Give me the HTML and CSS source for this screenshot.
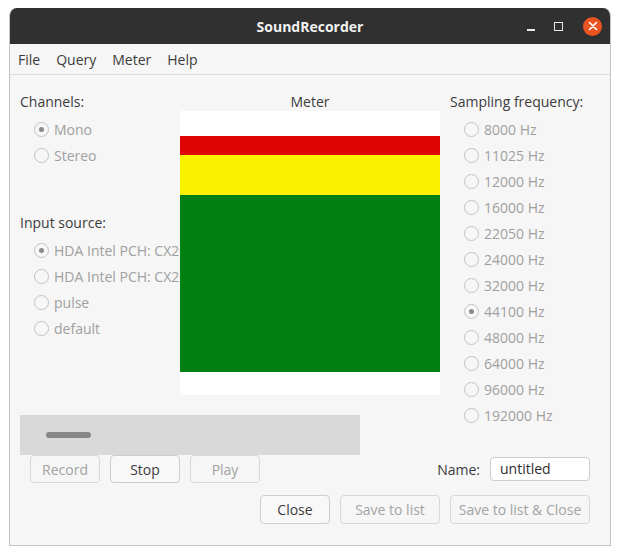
FILE: index.html
```html
<!DOCTYPE html>
<html>
<head>
<meta charset="utf-8">
<link rel="stylesheet" href="styles.css">
</head>
<body>
<div class="window">
  <div class="titlebar">
    <div class="title">SoundRecorder</div>
    <div class="controls">
      <span class="ctl min"></span>
      <span class="ctl max"></span>
      <span class="ctl close">
        <svg width="18" height="18" viewBox="0 0 18 18"><path d="M5.5 5.5 L12.5 12.5 M12.5 5.5 L5.5 12.5" stroke="#fff" stroke-width="1.6" stroke-linecap="round"/></svg>
      </span>
    </div>
  </div>
  <div class="menubar">
    <span class="menu">File</span>
    <span class="menu">Query</span>
    <span class="menu">Meter</span>
    <span class="menu">Help</span>
  </div>
  <div class="content">
    <div class="grid">
      <div class="leftcol">
        <div class="label">Channels:</div>
        <div class="radio checked"><span class="dot"></span>Mono</div>
        <div class="radio"><span class="dot"></span>Stereo</div>
        <div class="label src">Input source:</div>
        <div class="radio checked"><span class="dot"></span>HDA Intel PCH: CX20751/2 Analog</div>
        <div class="radio"><span class="dot"></span>HDA Intel PCH: CX20751/2 Alt Analog</div>
        <div class="radio"><span class="dot"></span>pulse</div>
        <div class="radio"><span class="dot"></span>default</div>
      </div>
      <div class="metercol">
        <div class="label center">Meter</div>
        <div class="meter">
          <div class="m white1"></div>
          <div class="m red"></div>
          <div class="m yellow"></div>
          <div class="m green"></div>
          <div class="m white2"></div>
        </div>
      </div>
      <div class="rightcol">
        <div class="label">Sampling frequency:</div>
        <div class="radio"><span class="dot"></span>8000 Hz</div>
        <div class="radio"><span class="dot"></span>11025 Hz</div>
        <div class="radio"><span class="dot"></span>12000 Hz</div>
        <div class="radio"><span class="dot"></span>16000 Hz</div>
        <div class="radio"><span class="dot"></span>22050 Hz</div>
        <div class="radio"><span class="dot"></span>24000 Hz</div>
        <div class="radio"><span class="dot"></span>32000 Hz</div>
        <div class="radio checked"><span class="dot"></span>44100 Hz</div>
        <div class="radio"><span class="dot"></span>48000 Hz</div>
        <div class="radio"><span class="dot"></span>64000 Hz</div>
        <div class="radio"><span class="dot"></span>96000 Hz</div>
        <div class="radio"><span class="dot"></span>192000 Hz</div>
      </div>
      <div class="scale"><span class="handle"></span></div>
    </div>
    <div class="row1">
      <div class="btns">
        <button class="btn disabled w70">Record</button>
        <button class="btn w70">Stop</button>
        <button class="btn disabled w70">Play</button>
      </div>
      <div class="name">
        <span class="namelabel">Name:</span>
        <span class="entry">untitled</span>
      </div>
    </div>
    <div class="row2">
      <button class="btn w70">Close</button>
      <button class="btn disabled w100">Save to list</button>
      <button class="btn disabled w140">Save to list &amp; Close</button>
    </div>
  </div>
</div>
</body>
</html>
```
FILE: styles.css
```css
* { box-sizing: border-box; }
html, body { margin: 0; padding: 0; background: #ffffff; }
body {
  font-family: "Open Sans", "Noto Sans", sans-serif;
  font-size: 14px;
  color: #3c3c3c;
}
.window {
  margin: 8px 0 0 9px;
  width: 602px;
  height: 538px;
  background: #f6f6f6;
  border: 1px solid #c4c4c4;
  border-top: none;
  border-radius: 8px 8px 0 0;
  overflow: hidden;
}
.titlebar {
  height: 36px;
  background: #303030;
  display: flex;
  align-items: center;
  justify-content: center;
  position: relative;
  margin: 0 -1px;
}
.title {
  color: #f2f2f2;
  font-weight: 700;
  font-size: 14px;
}
.controls {
  position: absolute;
  right: 9px;
  top: 0;
  height: 36px;
  display: flex;
  align-items: center;
  gap: 0;
}
.ctl { display: block; }
.min { width: 8px; height: 1.5px; background: #e8e8e8; margin-top: 8px; margin-right: 19px; }
.max { width: 9px; height: 9px; border: 1.3px solid #e8e8e8; margin-right: 20px; }
.close {
  width: 19px; height: 19px; border-radius: 50%;
  background: #e95420;
  display: flex; align-items: center; justify-content: center;
}
.menubar {
  height: 31px;
  border-bottom: 1px solid #dedede;
  display: flex;
  align-items: center;
  padding-left: 0;
  gap: 0;
}
.menu { padding: 0 8px; color: #3c3c3c; }
.content { padding: 18px 10px 0 10px; }
.grid {
  display: grid;
  grid-template-columns: 160px 260px 150px;
  column-gap: 0;
  grid-template-rows: 302px 60px;
}
.leftcol { grid-column: 1; grid-row: 1; overflow: hidden; white-space: nowrap; }
.metercol { grid-column: 2; grid-row: 1; display: flex; flex-direction: column; }
.rightcol { grid-column: 3; grid-row: 1 / span 2; padding-left: 10px; white-space: nowrap; }
.label { height: 18px; line-height: 18px; color: #3c3c3c; }
.label.center { text-align: center; }
.label.src { margin-top: 46px; }
.radio {
  height: 26px;
  display: flex;
  align-items: center;
  padding-left: 14px;
  color: #a0a0a0;
}
.leftcol .label + .radio, .rightcol .label + .radio { margin-top: 5px; }
.dot {
  width: 15px; height: 15px;
  border: 1px solid #c2c2c2;
  border-radius: 50%;
  background: #f7f7f7;
  margin-right: 5px;
  flex: none;
  display: flex; align-items: center; justify-content: center;
}
.checked .dot::after {
  content: "";
  width: 5px; height: 5px; border-radius: 50%;
  background: #8a8a8a;
}
.meter { height: 284px; display: flex; flex-direction: column; }
.m { width: 260px; }
.white1 { height: 25px; background: #ffffff; }
.red { height: 19px; background: #de0404; }
.yellow { height: 40px; background: #f9f100; }
.green { height: 177px; background: #007f12; }
.white2 { height: 23px; background: #ffffff; }
.scale {
  grid-column: 1 / span 2;
  grid-row: 2;
  margin-top: 20px;
  width: 340px;
  height: 40px;
  background: #d9d9d9;
  display: flex;
  align-items: center;
  padding-left: 26px;
}
.handle { width: 45px; height: 6px; border-radius: 3px; background: #878787; }
.row1 {
  margin-top: 0;
  display: flex;
  justify-content: space-between;
  align-items: center;
  height: 28px;
  padding: 0 10px;
}
.btns { display: flex; gap: 10px; }
.btn {
  height: 28px;
  font-family: inherit;
  font-size: 14px;
  color: #3c3c3c;
  background: #f8f8f8;
  border: 1px solid #cdcdcd;
  border-radius: 4px;
  padding: 0;
  margin: 0;
}
.btn.disabled { color: #a3a3a3; border-color: #d9d9d9; background: #f6f6f6; }
.w70 { width: 70px; }
.w100 { width: 100px; }
.w140 { width: 140px; }
.name { display: flex; align-items: center; }
.namelabel { margin-right: 10px; }
.entry {
  width: 100px; height: 24px;
  background: #ffffff;
  border: 1px solid #cdcdcd;
  border-radius: 4px;
  padding-left: 9px;
  line-height: 22px;
  color: #2e2e2e;
}
.row2 {
  margin-top: 12px;
  display: flex;
  justify-content: flex-end;
  gap: 10px;
  padding-right: 10px;
}
.row2 .btn { height: 29px; }
```
